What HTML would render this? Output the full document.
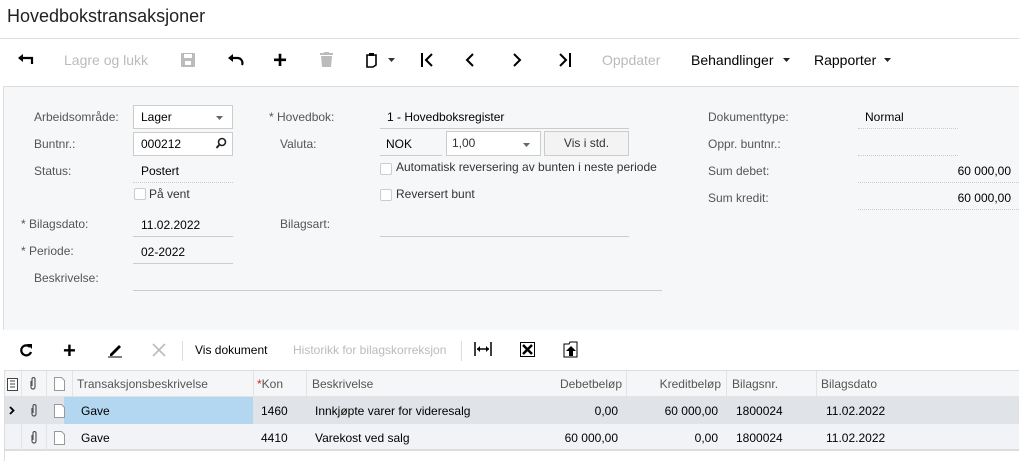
<!DOCTYPE html>
<html><head><meta charset="utf-8"><style>
*{margin:0;padding:0;box-sizing:border-box}
body{width:1019px;height:461px;overflow:hidden;background:#fff;font-family:"Liberation Sans",sans-serif;font-size:12px;color:#000;position:relative}
.a{position:absolute;white-space:nowrap}
.lbl{color:#555}
.st{color:#333}
.ul{border-bottom:1px solid #ccc}
.dot{border-bottom:1px dotted #ccc}
.box{border:1px solid #ccc;background:#fff}
.cb{width:12px;height:12px;border:1px solid #ccc;border-radius:2px;background:#fff}
.dis{color:#bbb}
.hd{color:#555}
</style></head><body>
<div class="a" style="left:7px;top:6px;font-size:18px;color:#222">Hovedbokstransaksjoner</div>
<div class="a" style="left:0;top:38px;width:1019px;border-top:1px solid #ddd"></div>

<svg class="a" style="left:18px;top:53px" width="16" height="14"><path d="M1 5h13v6" stroke="#000" stroke-width="2.2" fill="none"/><path d="M0 5l5-4v8z" fill="#000"/></svg>
<div class="a dis" style="left:64px;top:52px;font-size:14px">Lagre og lukk</div>
<svg class="a" style="left:181px;top:53px" width="14" height="14"><rect x="0" y="0" width="14" height="14" rx="1" fill="#bbb"/><rect x="3" y="1" width="8" height="4" fill="#fff"/><rect x="4" y="8" width="6" height="4" fill="#fff"/></svg>
<svg class="a" style="left:228px;top:54px" width="16" height="12"><path d="M4 4h6a5 5 0 0 1 4 7" stroke="#000" stroke-width="2.2" fill="none"/><path d="M0 4l5-4v8z" fill="#000"/></svg>
<div class="a" style="left:273px;top:47px;font-size:24px;font-weight:bold">+</div>
<svg class="a" style="left:320px;top:52px" width="13" height="15"><rect x="0" y="1" width="13" height="2" fill="#bbb"/><rect x="4" y="0" width="5" height="2" fill="#bbb"/><path d="M1 4h11l-1 11h-9z" fill="#bbb"/></svg>
<svg class="a" style="left:366px;top:52px" width="14" height="16"><path d="M1 3h9v10l-3 2h-6z" stroke="#000" stroke-width="1.6" fill="none"/><rect x="3" y="1" width="5" height="3" fill="#000"/></svg>
<svg class="a" style="left:388px;top:58px" width="8" height="5"><path d="M0 0h7l-3.5 4z" fill="#333"/></svg>
<svg class="a" style="left:420px;top:53px" width="14" height="14"><path d="M2 0v14M12 1l-6 6 6 6" stroke="#000" stroke-width="2" fill="none"/></svg>
<svg class="a" style="left:465px;top:53px" width="10" height="14"><path d="M8 1l-6 6 6 6" stroke="#000" stroke-width="2" fill="none"/></svg>
<svg class="a" style="left:512px;top:53px" width="10" height="14"><path d="M2 1l6 6-6 6" stroke="#000" stroke-width="2" fill="none"/></svg>
<svg class="a" style="left:558px;top:53px" width="14" height="14"><path d="M12 0v14M2 1l6 6-6 6" stroke="#000" stroke-width="2" fill="none"/></svg>
<div class="a dis" style="left:602px;top:52px;font-size:14px">Oppdater</div>
<div class="a" style="left:691px;top:52px;font-size:14px">Behandlinger</div>
<svg class="a" style="left:783px;top:58px" width="8" height="5"><path d="M0 0h7l-3.5 4z" fill="#222"/></svg>
<div class="a" style="left:814px;top:52px;font-size:14px">Rapporter</div>
<svg class="a" style="left:884px;top:58px" width="8" height="5"><path d="M0 0h7l-3.5 4z" fill="#222"/></svg>

<div class="a" style="left:3px;top:86px;width:1016px;height:244px;background:#f6f7f9;border-top:1px solid #ddd;border-left:1px solid #ddd"></div>

<div class="a lbl" style="left:34px;top:110px">Arbeidsområde:</div>
<div class="a box" style="left:133px;top:105px;width:100px;height:24px"></div>
<div class="a" style="left:141px;top:110px">Lager</div>
<svg class="a" style="left:216px;top:116px" width="8" height="5"><path d="M0 0h7l-3.5 4z" fill="#666"/></svg>
<div class="a lbl" style="left:34px;top:137px">Buntnr.:</div>
<div class="a box" style="left:133px;top:132px;width:100px;height:24px"></div>
<div class="a" style="left:141px;top:137px">000212</div>
<svg class="a" style="left:215px;top:137px" width="12" height="12"><circle cx="7" cy="5" r="3.5" stroke="#222" stroke-width="1.6" fill="none"/><path d="M4.5 7.5l-3 3.5" stroke="#222" stroke-width="2"/></svg>
<div class="a lbl" style="left:34px;top:164px">Status:</div>
<div class="a dot" style="left:133px;top:159px;width:100px;height:24px"></div>
<div class="a" style="left:141px;top:164px">Postert</div>
<div class="a cb" style="left:134px;top:188px"></div>
<div class="a st" style="left:149px;top:187px">På vent</div>
<div class="a lbl" style="left:21px;top:217px">*&nbsp;Bilagsdato:</div>
<div class="a ul" style="left:133px;top:212px;width:100px;height:25px"></div>
<div class="a" style="left:141px;top:218px">11.02.2022</div>
<div class="a lbl" style="left:21px;top:244px">*&nbsp;Periode:</div>
<div class="a ul" style="left:133px;top:239px;width:100px;height:25px"></div>
<div class="a" style="left:141px;top:245px">02-2022</div>
<div class="a lbl" style="left:34px;top:271px">Beskrivelse:</div>
<div class="a ul" style="left:133px;top:266px;width:529px;height:25px"></div>

<div class="a lbl" style="left:269px;top:110px">*&nbsp;Hovedbok:</div>
<div class="a ul" style="left:380px;top:104px;width:249px;height:25px"></div>
<div class="a" style="left:387px;top:110px">1 - Hovedboksregister</div>
<div class="a lbl" style="left:280px;top:137px">Valuta:</div>
<div class="a ul" style="left:380px;top:131px;width:62px;height:25px"></div>
<div class="a" style="left:386px;top:137px">NOK</div>
<div class="a box" style="left:446px;top:131px;width:95px;height:25px"></div>
<div class="a st" style="left:452px;top:136px">1,00</div>
<svg class="a" style="left:523px;top:143px" width="8" height="5"><path d="M0 0h7l-3.5 4z" fill="#666"/></svg>
<div class="a" style="left:544px;top:131px;width:85px;height:25px;border:1px solid #ccc;background:#f3f3f3;text-align:center;line-height:22px;color:#333">Vis i std.</div>
<div class="a cb" style="left:380px;top:163px"></div>
<div class="a st" style="left:396px;top:160px">Automatisk reversering av bunten i neste periode</div>
<div class="a cb" style="left:380px;top:189px"></div>
<div class="a st" style="left:396px;top:187px">Reversert bunt</div>
<div class="a lbl" style="left:280px;top:217px">Bilagsart:</div>
<div class="a ul" style="left:380px;top:212px;width:249px;height:25px"></div>

<div class="a lbl" style="left:708px;top:110px">Dokumenttype:</div>
<div class="a dot" style="left:858px;top:104px;width:100px;height:25px"></div>
<div class="a" style="left:865px;top:110px">Normal</div>
<div class="a lbl" style="left:708px;top:137px">Oppr. buntnr.:</div>
<div class="a dot" style="left:858px;top:131px;width:100px;height:25px"></div>
<div class="a lbl" style="left:708px;top:164px">Sum debet:</div>
<div class="a dot" style="left:858px;top:158px;width:161px;height:25px"></div>
<div class="a" style="left:940px;top:164px;width:71px;text-align:right">60 000,00</div>
<div class="a lbl" style="left:708px;top:191px">Sum kredit:</div>
<div class="a dot" style="left:858px;top:185px;width:161px;height:25px"></div>
<div class="a" style="left:940px;top:191px;width:71px;text-align:right">60 000,00</div>

<svg class="a" style="left:19px;top:343px" width="14" height="14"><path d="M11 4A5 5 0 1 0 12 9" stroke="#000" stroke-width="2.2" fill="none"/><path d="M8 1h5v5z" fill="#000"/></svg>
<div class="a" style="left:63px;top:338px;font-size:22px;font-weight:bold">+</div>
<svg class="a" style="left:107px;top:342px" width="16" height="16"><path d="M3 12l9-9 2 2-9 9h-2z" fill="#000"/><path d="M1 15h14" stroke="#000" stroke-width="1"/></svg>
<svg class="a" style="left:152px;top:343px" width="14" height="14"><path d="M1 1l12 12M13 1l-12 12" stroke="#bbb" stroke-width="1.6"/></svg>
<div class="a" style="left:182px;top:341px;height:20px;border-left:1px solid #ddd"></div>
<div class="a" style="left:195px;top:343px">Vis dokument</div>
<div class="a dis" style="left:293px;top:343px">Historikk for bilagskorreksjon</div>
<div class="a" style="left:461px;top:341px;height:20px;border-left:1px solid #ddd"></div>
<svg class="a" style="left:474px;top:342px" width="18" height="14"><path d="M1 0v14M17 0v14M3 7h12" stroke="#000" stroke-width="1.5"/><path d="M3 7l3-3v6zM15 7l-3-3v6z" fill="#000"/></svg>
<svg class="a" style="left:520px;top:342px" width="15" height="15"><rect x="0.5" y="0.5" width="14" height="14" fill="#fff" stroke="#000"/><path d="M3 3l9 9M12 3l-9 9" stroke="#000" stroke-width="2.5"/></svg>
<svg class="a" style="left:563px;top:341px" width="16" height="17"><path d="M1 3h5l1-2h7v15h-13z" fill="#fff" stroke="#000"/><path d="M8 5l5 5h-3v5h-4v-5h-3z" fill="#000"/></svg>

<div class="a" style="left:4px;top:370px;width:1015px;height:91px;border-left:1px solid #ddd"></div>
<div class="a" style="left:5px;top:370px;width:1014px;height:27px;background:#f5f6f8;border-top:1px solid #ddd;border-bottom:1px solid #e3e3e3"></div>
<div class="a" style="left:5px;top:397px;width:1014px;height:27px;background:#e0e3e8"></div>
<div class="a" style="left:64px;top:397px;width:189px;height:27px;background:#b3d7f0"></div>
<div class="a" style="left:5px;top:424px;width:1014px;height:27px;background:#f1f3f6;border-bottom:2px solid #ddd"></div>
<div class="a" style="left:21px;top:371px;height:80px;border-left:1px solid #e3e3e3"></div>
<div class="a" style="left:46px;top:371px;height:80px;border-left:1px solid #e3e3e3"></div>
<div class="a" style="left:72px;top:371px;height:26px;border-left:1px solid #e3e3e3"></div>
<div class="a" style="left:253px;top:371px;height:26px;border-left:1px solid #e3e3e3"></div>
<div class="a" style="left:306px;top:371px;height:26px;border-left:1px solid #e3e3e3"></div>
<div class="a" style="left:626px;top:371px;height:26px;border-left:1px solid #e3e3e3"></div>
<div class="a" style="left:726px;top:371px;height:26px;border-left:1px solid #e3e3e3"></div>
<div class="a" style="left:816px;top:371px;height:26px;border-left:1px solid #e3e3e3"></div>
<svg class="a" style="left:7px;top:378px" width="11" height="13"><rect x="0.5" y="0.5" width="10" height="12" fill="#fff" stroke="#444"/><path d="M3 3h5M3 6h5M3 9h5" stroke="#444"/></svg>
<svg class="a" style="left:29px;top:377px" width="8" height="14"><path d="M2 4v6a2 2 0 0 0 4 0v-8a1.5 1.5 0 0 0-3 0v7" stroke="#555" stroke-width="1.2" fill="none"/></svg>
<svg class="a" style="left:54px;top:377px" width="11" height="14"><path d="M0.5 0.5h7l3 3v10h-10z" fill="#fff" stroke="#999"/></svg>
<div class="a hd" style="left:77px;top:377px">Transaksjonsbeskrivelse</div>
<div class="a hd" style="left:257px;top:377px"><span style="color:#d22">*</span>Kon</div>
<div class="a hd" style="left:312px;top:377px">Beskrivelse</div>
<div class="a hd" style="left:520px;top:377px;width:102px;text-align:right">Debetbeløp</div>
<div class="a hd" style="left:626px;top:377px;width:95px;text-align:right">Kreditbeløp</div>
<div class="a hd" style="left:732px;top:377px">Bilagsnr.</div>
<div class="a hd" style="left:821px;top:377px">Bilagsdato</div>
<svg class="a" style="left:9px;top:406px" width="6" height="9"><path d="M1 1l3.5 3.5-3.5 3.5" stroke="#000" stroke-width="1.8" fill="none"/></svg>
<svg class="a" style="left:30px;top:404px" width="8" height="14"><path d="M2 4v6a2 2 0 0 0 4 0v-8a1.5 1.5 0 0 0-3 0v7" stroke="#555" stroke-width="1.2" fill="none"/></svg>
<svg class="a" style="left:54px;top:404px" width="11" height="14"><path d="M0.5 0.5h7l3 3v10h-10z" fill="#fff" stroke="#999"/></svg>
<div class="a" style="left:81px;top:404px">Gave</div>
<div class="a" style="left:261px;top:404px">1460</div>
<div class="a" style="left:315px;top:404px">Innkjøpte varer for videresalg</div>
<div class="a" style="left:520px;top:404px;width:98px;text-align:right">0,00</div>
<div class="a" style="left:626px;top:404px;width:92px;text-align:right">60 000,00</div>
<div class="a" style="left:736px;top:404px">1800024</div>
<div class="a" style="left:826px;top:404px">11.02.2022</div>
<svg class="a" style="left:30px;top:431px" width="8" height="14"><path d="M2 4v6a2 2 0 0 0 4 0v-8a1.5 1.5 0 0 0-3 0v7" stroke="#555" stroke-width="1.2" fill="none"/></svg>
<svg class="a" style="left:54px;top:431px" width="11" height="14"><path d="M0.5 0.5h7l3 3v10h-10z" fill="#fff" stroke="#999"/></svg>
<div class="a" style="left:81px;top:431px">Gave</div>
<div class="a" style="left:261px;top:431px">4410</div>
<div class="a" style="left:315px;top:431px">Varekost ved salg</div>
<div class="a" style="left:520px;top:431px;width:98px;text-align:right">60 000,00</div>
<div class="a" style="left:626px;top:431px;width:92px;text-align:right">0,00</div>
<div class="a" style="left:736px;top:431px">1800024</div>
<div class="a" style="left:826px;top:431px">11.02.2022</div>
</body></html>
